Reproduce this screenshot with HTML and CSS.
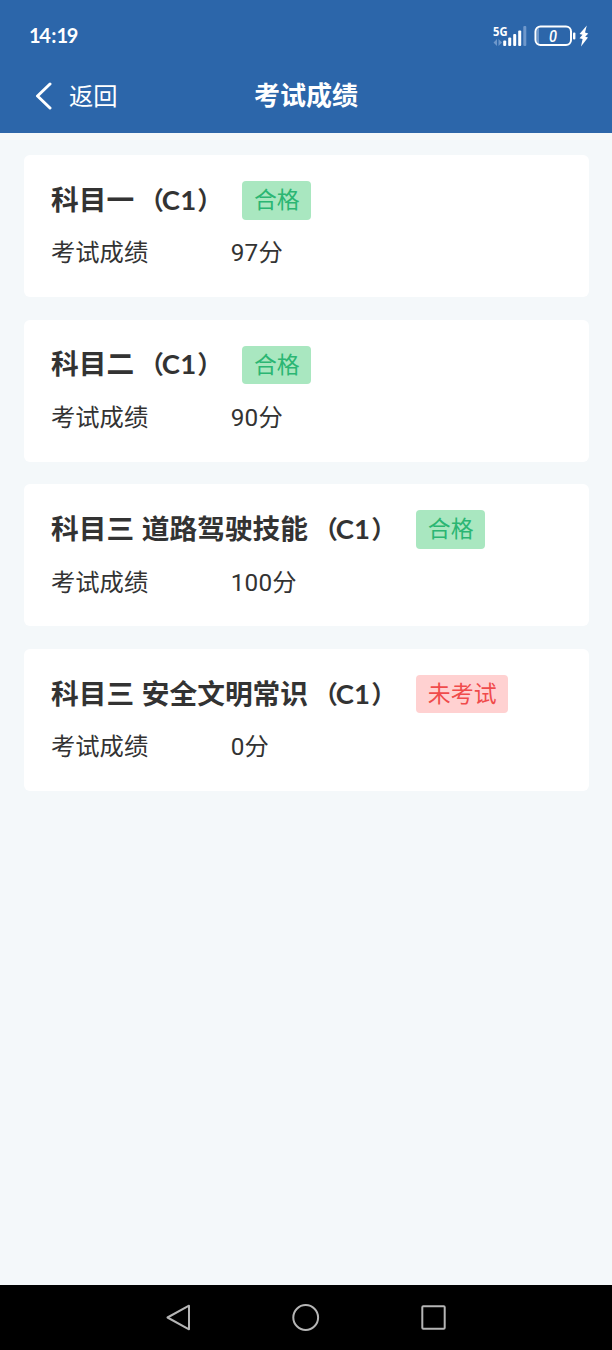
FILE: index.html
```html
<!DOCTYPE html>
<html lang="zh-CN">
<head>
<meta charset="utf-8">
<title>考试成绩</title>
<link rel="stylesheet" href="styles.css">
</head>
<body>
<div class="screen">
  <header class="header">
    <div class="status">
      <span class="time">14<span class="colon">:</span>19</span>
      <svg class="indicators" width="98" height="26" viewBox="0 0 98 26">
        <text class="net" x="0" y="12.5" textLength="14.5" lengthAdjust="spacingAndGlyphs">5G</text>
        <g class="dim"><path d="M0.5 19.5L4 16V23ZM9 19.5L5.5 16V23Z"/><rect x="30.3" y="3" width="3" height="20" rx="1"/><rect x="44" y="5" width="2" height="16"/></g>
        <g class="solid"><rect x="10.2" y="17.5" width="3" height="5.5" rx="1"/><rect x="15.2" y="14.5" width="3" height="8.5" rx="1"/><rect x="20.2" y="11" width="3" height="12" rx="1"/><rect x="25.2" y="7.5" width="3" height="15.5" rx="1"/><rect x="80" y="9.5" width="2.4" height="7" rx="1"/><path d="M93.8 2.5L86.5 11L89.5 11.8L86.5 15.2L89.6 16L88 23.5L95 14.6L92.2 13.8L95.3 10.4L92 9.6Z"/></g>
        <rect class="battery" x="42.5" y="3.5" width="35.5" height="18.5" rx="5"/>
        <text class="level" x="56" y="18.8" textLength="8" lengthAdjust="spacingAndGlyphs">0</text>
      </svg>
    </div>
    <nav class="nav">
      <a class="back">
        <svg class="chevron" width="18" height="28" viewBox="0 0 18 28"><path d="M15 2L2.5 14L15 26"/></svg>
        <span>返回</span>
      </a>
      <h1 class="heading">考试成绩</h1>
    </nav>
  </header>
  <main class="list">
    <section class="card">
      <div class="top"><h2 class="title">科目一<span class="paren open">（</span><span class="code">C1</span><span class="paren close">）</span></h2><span class="badge pass">合格</span></div>
      <div class="result"><span class="label">考试成绩</span><span><span class="num">97</span>分</span></div>
    </section>
    <section class="card">
      <div class="top"><h2 class="title">科目二<span class="paren open">（</span><span class="code">C1</span><span class="paren close">）</span></h2><span class="badge pass">合格</span></div>
      <div class="result"><span class="label">考试成绩</span><span><span class="num">90</span>分</span></div>
    </section>
    <section class="card">
      <div class="top"><h2 class="title">科目三 道路驾驶技能<span class="paren open">（</span><span class="code">C1</span><span class="paren close">）</span></h2><span class="badge pass">合格</span></div>
      <div class="result"><span class="label">考试成绩</span><span><span class="num">100</span>分</span></div>
    </section>
    <section class="card">
      <div class="top"><h2 class="title">科目三 安全文明常识<span class="paren open">（</span><span class="code">C1</span><span class="paren close">）</span></h2><span class="badge pending">未考试</span></div>
      <div class="result"><span class="label">考试成绩</span><span><span class="num">0</span>分</span></div>
    </section>
  </main>
  <footer class="system">
    <svg width="28" height="28" viewBox="0 0 28 28"><path d="M25 1.7V25.3L3.5 13.5Z"/></svg>
    <svg width="28" height="28" viewBox="0 0 28 28"><circle cx="13.7" cy="13.5" r="12.4"/></svg>
    <svg width="28" height="28" viewBox="0 0 28 28"><rect x="2.3" y="2.3" width="22.4" height="22.4" rx="1"/></svg>
  </footer>
</div>
</body>
</html>
```
FILE: styles.css
```css
* { box-sizing: border-box; }
body { margin: 0; font-family: "Noto Sans CJK SC", sans-serif; color: #333; }
.screen { display: flex; flex-direction: column; width: 612px; height: 1350px; background: #f4f8fa; }
.header { height: 132.5px; background: #2c66aa; color: #fff; }
.status { display: flex; justify-content: space-between; align-items: center; height: 60px; padding: 12px 21px 0 29px; }
.time { font: 700 20px/24px Lato, sans-serif; letter-spacing: -1.4px; margin-bottom: 2px; }
.colon { margin: 0 1.5px 0 1.8px; }
.indicators { display: block; }
.net { font: 700 13px "Open Sans", sans-serif; fill: #fff; }
.level { font: italic 500 17px Roboto, sans-serif; fill: #fff; }
.solid { fill: #fff; }
.dim { fill: #6f98cb; }
.battery { fill: none; stroke: #fff; stroke-width: 2; }
.nav { display: grid; grid-template-columns: 1fr auto 1fr; align-items: center; height: 72px; padding: 0 35px; }
.back { display: flex; align-items: center; gap: 16px; font-size: 24.3px; line-height: 36px; }
.back span { padding-bottom: 2px; }
.chevron { fill: none; stroke: #fff; stroke-width: 3; stroke-linecap: round; stroke-linejoin: round; }
.heading { margin: 0; padding-bottom: 4px; font-size: 26px; line-height: 36px; font-weight: 700; }
.list { display: flex; flex-direction: column; flex: 1; gap: 22.6px; padding: 22.5px 23px 0 24px; }
.card { height: 142px; padding: 26px 27px; border-radius: 6px; background: #fff; }
.top { display: flex; align-items: center; height: 38.5px; }
.title { margin: 0 17px 0 0; padding-bottom: 3px; font-size: 27.7px; line-height: 38px; font-weight: 700; white-space: nowrap; word-spacing: 1.5px; }
.code { display: inline-block; width: 36px; font-family: Lato, sans-serif; font-size: 27.5px; letter-spacing: 0.2px; }
.paren { display: inline-block; width: 27.7px; font-size: 25px; line-height: 30px; }
.open { padding-left: 5px; }
.close { text-indent: -0.5px; }
.badge { height: 38.5px; padding: 0 11.5px; border-radius: 4px; font-size: 22.9px; line-height: 35px; white-space: nowrap; }
.pass { background: #a9e7c0; color: #2bb673; }
.pending { background: #ffd1d1; color: #f04b4b; }
.result { display: flex; height: 36px; margin-top: 13.9px; font-size: 24.3px; line-height: 36px; }
.label { width: 179.7px; }
.num { font-family: Roboto, sans-serif; font-size: 24.3px; letter-spacing: 0.2px; }
.system { display: flex; justify-content: center; align-items: center; gap: 100px; height: 65px; background: #000; }
.system svg { fill: none; stroke: #b5b5b5; stroke-width: 2; stroke-linejoin: round; }
```
